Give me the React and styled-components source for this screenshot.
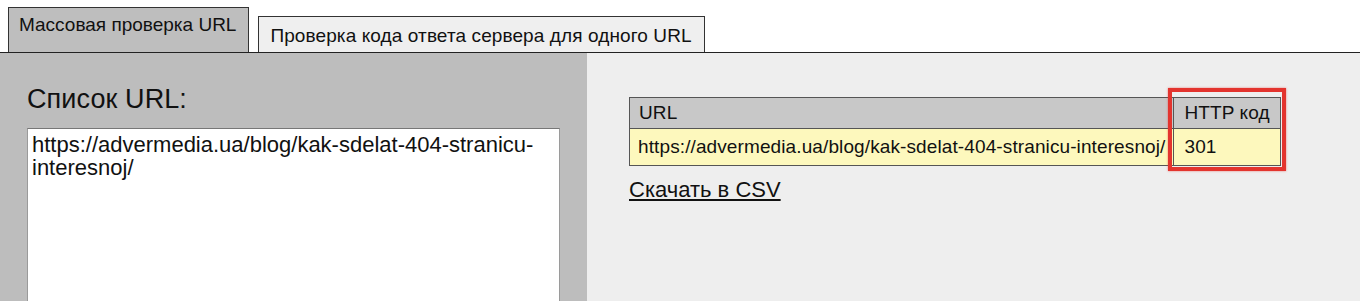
import React from "react";
import styled, { createGlobalStyle } from "styled-components";

const Global = createGlobalStyle`
  html, body { margin: 0; padding: 0; background: #fff; }
  body { font-family: "Liberation Sans", Arial, sans-serif; color: #111; }
`;

const Page = styled.div`
  width: 1360px;
  height: 301px;
  display: flex;
  flex-direction: column;
  overflow: hidden;
`;

const TabBar = styled.div`
  flex-shrink: 0;
  display: flex;
  align-items: flex-end;
  gap: 9px;
  height: 53px;
  padding-left: 8px;
  box-sizing: border-box;
  border-bottom: 1px solid #222;
`;

const Tab = styled.div`
  box-sizing: border-box;
  height: ${(p) => (p.$active ? "45px" : "36px")};
  padding: ${(p) => (p.$active ? "6px 12px 0 10px" : "8px 12px 0 11px")};
  background: ${(p) => (p.$active ? "#bebebe" : "#efefef")};
  border: 1px solid #333;
  border-bottom: none;
  font-size: 19px;
  line-height: 22px;
  letter-spacing: ${(p) => (p.$active ? "0" : "0.1px")};
  white-space: nowrap;
`;

const Panels = styled.div`
  flex: 1;
  min-height: 0;
  display: flex;
  overflow: hidden;
`;

const LeftPanel = styled.div`
  width: 587px;
  background: #bdbdbd;
  padding: 30px 0 0 27px;
  box-sizing: border-box;
`;

const Heading = styled.h2`
  margin: 0 0 13px 0;
  font-weight: normal;
  font-size: 27px;
  line-height: 32px;
  letter-spacing: 0.1px;
`;

const UrlArea = styled.textarea`
  display: block;
  width: 533px;
  height: 200px;
  box-sizing: border-box;
  margin: 0;
  padding: 4px 4px;
  border: 1px solid #9a9a9a;
  border-top-color: #777;
  background: #fff;
  font-family: "Liberation Sans", Arial, sans-serif;
  font-size: 22px;
  line-height: 23px;
  color: #111;
  resize: none;
  outline: none;
`;

const RightPanel = styled.div`
  flex: 1;
  background: #eeeeee;
  padding: 44px 0 0 42px;
  box-sizing: border-box;
`;

const TableWrap = styled.div`
  position: relative;
  display: inline-block;
  vertical-align: top;
`;

const Table = styled.table`
  border-collapse: collapse;
  font-size: 19px;
  line-height: 22px;
  letter-spacing: 0.11px;
`;

const Th = styled.th`
  background: #c8c8c8;
  border: 1px solid #555;
  font-weight: normal;
  text-align: left;
  height: 31px;
  padding: 0 ${(p) => (p.$narrow ? "10px" : "9px")};
  box-sizing: border-box;
`;

const Td = styled.td`
  background: #fdf8bd;
  border: 1px solid #555;
  height: 37px;
  padding: 0 ${(p) => (p.$narrow ? "10px" : "8px")};
  box-sizing: border-box;
`;

const Highlight = styled.div`
  position: absolute;
  right: -5px;
  top: -9px;
  width: 118px;
  height: 83px;
  box-sizing: border-box;
  border: 4px solid #e3342e;
  box-shadow: 0 0 2px rgba(227, 52, 46, 0.6);
  pointer-events: none;
`;

const DownloadRow = styled.div`
  margin-top: 11px;
`;

const Download = styled.a`
  font-size: 22px;
  line-height: 25px;
  color: #111;
  text-decoration: underline;
`;

export default function App() {
  return (
    <>
      <Global />
      <Page>
        <TabBar>
          <Tab $active>Массовая проверка URL</Tab>
          <Tab>Проверка кода ответа сервера для одного URL</Tab>
        </TabBar>
        <Panels>
          <LeftPanel>
            <Heading>Список URL:</Heading>
            <UrlArea
              readOnly
              defaultValue="https://advermedia.ua/blog/kak-sdelat-404-stranicu-interesnoj/"
            />
          </LeftPanel>
          <RightPanel>
            <TableWrap>
              <Table>
                <thead>
                  <tr>
                    <Th>URL</Th>
                    <Th $narrow>HTTP код</Th>
                  </tr>
                </thead>
                <tbody>
                  <tr>
                    <Td>https://advermedia.ua/blog/kak-sdelat-404-stranicu-interesnoj/</Td>
                    <Td $narrow>301</Td>
                  </tr>
                </tbody>
              </Table>
              <Highlight />
            </TableWrap>
            <DownloadRow>
              <Download href="#">Скачать в CSV</Download>
            </DownloadRow>
          </RightPanel>
        </Panels>
      </Page>
    </>
  );
}
